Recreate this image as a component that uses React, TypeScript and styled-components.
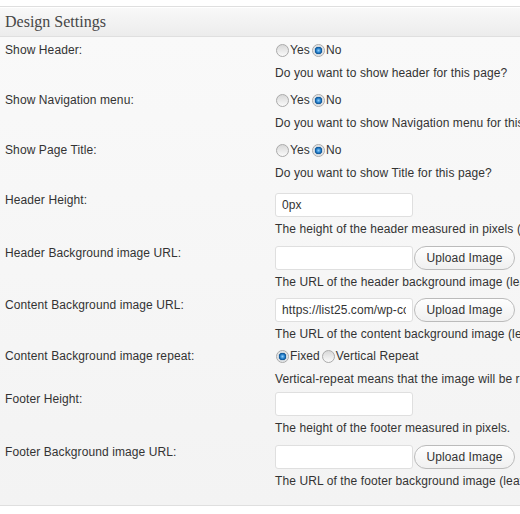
import { FC } from 'react'
import styled, { createGlobalStyle } from 'styled-components'

const GlobalStyle = createGlobalStyle`
  html, body {
    margin: 0;
    padding: 0;
    background: #fff;
    overflow: hidden;
  }
  body {
    font-family: 'Liberation Sans', Arial, sans-serif;
    font-size: 12px;
    letter-spacing: 0.1px;
    color: #333;
  }
`

interface IRadio {
  label: string
  checked?: boolean
}

interface IField {
  label: string
  kind: 'radio' | 'input' | 'upload'
  options?: IRadio[]
  value?: string
  description: string
  bottom: number
}

const fields: IField[] = [
  {
    label: 'Show Header:',
    kind: 'radio',
    options: [{ label: 'Yes' }, { label: 'No', checked: true }],
    description: 'Do you want to show header for this page?',
    bottom: 7,
  },
  {
    label: 'Show Navigation menu:',
    kind: 'radio',
    options: [{ label: 'Yes' }, { label: 'No', checked: true }],
    description: 'Do you want to show Navigation menu for this page?',
    bottom: 7,
  },
  {
    label: 'Show Page Title:',
    kind: 'radio',
    options: [{ label: 'Yes' }, { label: 'No', checked: true }],
    description: 'Do you want to show Title for this page?',
    bottom: 7,
  },
  {
    label: 'Header Height:',
    kind: 'input',
    value: '0px',
    description: 'The height of the header measured in pixels (e.g. 100px).',
    bottom: 4,
  },
  {
    label: 'Header Background image URL:',
    kind: 'upload',
    value: '',
    description: 'The URL of the header background image (leave blank for none).',
    bottom: 3,
  },
  {
    label: 'Content Background image URL:',
    kind: 'upload',
    value: 'https://list25.com/wp-content/uploads/bg.jpg',
    description: 'The URL of the content background image (leave blank for none).',
    bottom: 2,
  },
  {
    label: 'Content Background image repeat:',
    kind: 'radio',
    options: [{ label: 'Fixed', checked: true }, { label: 'Vertical Repeat' }],
    description: 'Vertical-repeat means that the image will be repeated vertically.',
    bottom: 0,
  },
  {
    label: 'Footer Height:',
    kind: 'input',
    value: '',
    description: 'The height of the footer measured in pixels.',
    bottom: 4,
  },
  {
    label: 'Footer Background image URL:',
    kind: 'upload',
    value: '',
    description: 'The URL of the footer background image (leave blank for none).',
    bottom: 16,
  },
]

const App: FC = () => {
  return (
    <>
      <GlobalStyle />
      <Box>
        <Header>Design Settings</Header>
        <Body>
          {fields.map((field) => (
            <Row key={field.label} $bottom={field.bottom}>
              <Label>{field.label}</Label>
              <Field>
                {field.kind === 'radio' ? (
                  <Options>
                    {field.options?.map((opt) => (
                      <Option key={opt.label}>
                        <Radio $checked={!!opt.checked} />
                        {opt.label}
                      </Option>
                    ))}
                  </Options>
                ) : (
                  <Controls>
                    <TextInput defaultValue={field.value} />
                    {field.kind === 'upload' && <Button>Upload Image</Button>}
                  </Controls>
                )}
                <Description $tight={field.kind === 'radio'}>
                  {field.description}
                </Description>
              </Field>
            </Row>
          ))}
        </Body>
      </Box>
    </>
  )
}

export default App

const Box = styled.div`
  margin-top: 6px;
  width: 760px;
  border-top: 1px solid #dfdfdf;
  border-bottom: 1px solid #dfdfdf;
`
const Header = styled.div`
  height: 29px;
  line-height: 29px;
  padding-left: 5px;
  font-family: 'Liberation Serif', 'DejaVu Serif', Georgia, serif;
  font-size: 16px;
  letter-spacing: 0;
  color: #464646;
  background: linear-gradient(#f9f9f9, #ececec);
  border-bottom: 1px solid #dfdfdf;
  box-shadow: inset 0 1px 0 #fff;
`
const Body = styled.div`
  padding-top: 1px;
  background: linear-gradient(#f9f9f9, #f3f3f3);
`
const Row = styled.div<{ $bottom: number }>`
  display: grid;
  grid-template-columns: 275px 1fr;
  padding: 4px 0 ${(p) => p.$bottom}px;
`
const Label = styled.div`
  padding-left: 5px;
  line-height: 16px;
  color: #333;
`
const Field = styled.div`
  display: flex;
  flex-direction: column;
  align-items: flex-start;
`
const Options = styled.div`
  display: flex;
  height: 16px;
  align-items: center;
  margin-left: 1px;
`
const Option = styled.label`
  display: flex;
  align-items: center;
  margin-right: 2px;
  white-space: nowrap;
`
const Radio = styled.span<{ $checked: boolean }>`
  display: inline-block;
  box-sizing: border-box;
  width: 13px;
  height: 13px;
  margin-right: 1px;
  border-radius: 50%;
  border: 1px solid #aaa;
  background: ${(p) =>
    p.$checked
      ? 'radial-gradient(circle at 50% 50%, #8fd0ff 0, #1a74c0 2.5px, #0b4f8f 3.5px, #cfd6dc 4px, #f4f4f4 6px)'
      : 'linear-gradient(#d8d8d8, #fafafa)'};
`
const Controls = styled.div`
  display: flex;
  align-items: center;
  margin-top: 1px;
`
const TextInput = styled.input`
  box-sizing: border-box;
  width: 138px;
  height: 24px;
  margin: 0;
  padding: 0 6px;
  border: 1px solid #dfdfdf;
  border-radius: 3px;
  background: #fff;
  font-family: 'Liberation Sans', Arial, sans-serif;
  font-size: 12px;
  letter-spacing: 0.1px;
  color: #333;
  outline: none;
`
const Button = styled.button`
  box-sizing: border-box;
  width: 101px;
  height: 24px;
  margin-left: 1px;
  padding: 0 10px;
  border: 1px solid #bbb;
  border-radius: 12px;
  background: linear-gradient(#fefefe, #f0f0f0);
  font-family: 'Liberation Sans', Arial, sans-serif;
  font-size: 12px;
  letter-spacing: 0.1px;
  color: #333;
`
const Description = styled.p<{ $tight: boolean }>`
  margin: ${(p) => (p.$tight ? 8 : 5)}px 0 0;
  line-height: 15px;
  white-space: nowrap;
  color: #333;
`
